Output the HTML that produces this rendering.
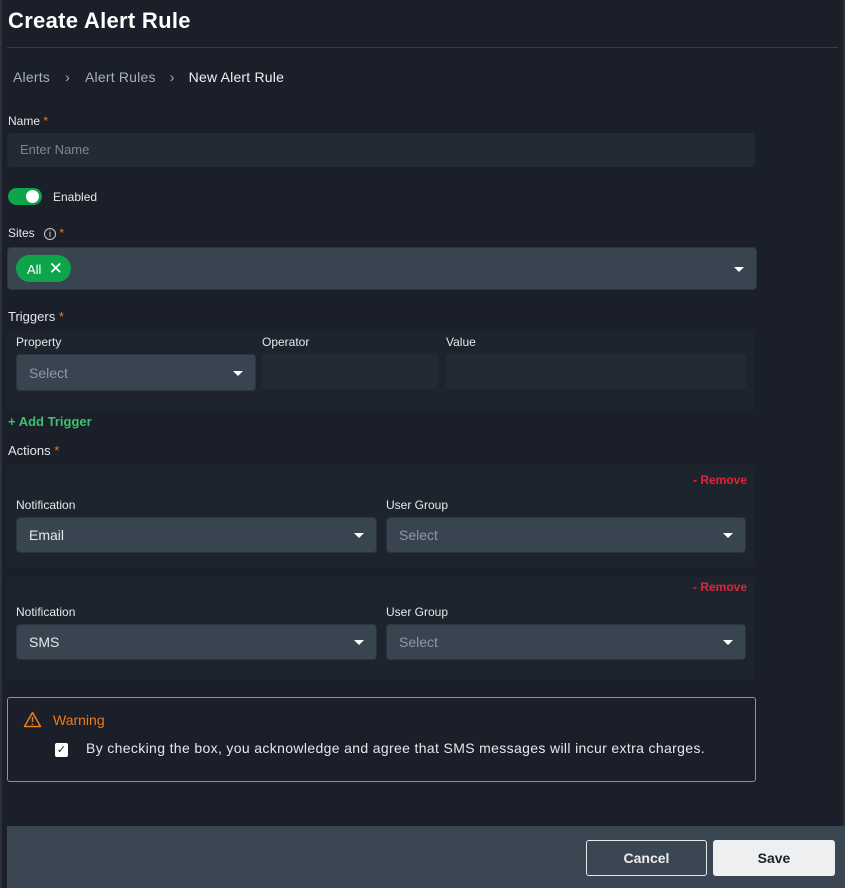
<!DOCTYPE html>
<html><head><meta charset="utf-8"><style>
*{box-sizing:border-box;margin:0;padding:0}
body{width:845px;height:888px;background:#1a1f29;font-family:"Liberation Sans",sans-serif;color:#e6e8eb;position:relative;overflow:hidden}
.a{position:absolute}
.lbl{font-size:12px;color:#e6e8eb}
.st{color:#f07c1a}
.panel{background:#1e242d}
.inp{background:#222a33;border-radius:4px}
.sel{background:#38444f;border:1px solid #2c343d;border-radius:4px;font-size:14px;padding-left:12px;display:flex;align-items:center}
.car{position:absolute;right:12px;top:50%;margin-top:-2px;width:0;height:0;border-left:5px solid transparent;border-right:5px solid transparent;border-top:5px solid #fff}
.ph{color:#8f98a2}
.rm{color:#e0243a;font-size:12px;font-weight:bold}
</style></head><body>
<div class="a" style="left:0;top:0;width:2px;height:888px;background:#2a313b"></div>
<div class="a" style="right:0;top:0;width:2px;height:888px;background:#2a313b"></div>
<div class="a" style="left:8px;top:8px;font-size:22px;font-weight:bold;color:#fff;letter-spacing:0.3px">Create Alert Rule</div>
<div class="a" style="left:7px;top:47px;width:831px;height:1px;background:#353d48"></div>
<div class="a" style="left:13px;top:69px;font-size:14px;color:#a9b0b8;letter-spacing:0.2px">Alerts<span style="display:inline-block;width:35px;text-align:center">›</span>Alert Rules<span style="display:inline-block;width:33px;text-align:center">›</span><span style="color:#eef0f2">New Alert Rule</span></div>
<div class="a lbl" style="left:8px;top:114px">Name <span class="st">*</span></div>
<div class="a inp" style="left:7px;top:133px;width:748px;height:34px;font-size:13px;padding:9px 13px;color:#7d8690">Enter Name</div>
<div class="a" style="left:8px;top:188px;width:34px;height:17px;background:#0ea44c;border-radius:9px"><div class="a" style="right:3px;top:2px;width:13px;height:13px;border-radius:50%;background:#fff"></div></div>
<div class="a lbl" style="left:53px;top:190px">Enabled</div>
<div class="a lbl" style="left:8px;top:226px">Sites <span style="display:inline-block;width:12px;height:12px;border:1px solid #ccc;border-radius:50%;font-size:9px;text-align:center;line-height:10px;margin-left:6px">i</span> <span class="st">*</span></div>
<div class="a sel" style="left:7px;top:247px;width:750px;height:43px;padding-left:8px"><div style="background:#0ea44c;border-radius:14px;height:27px;width:55px;color:#fff;font-size:13px;padding-left:11px;line-height:27px">All&nbsp; <span style="font-size:17px">✕</span></div><div class="car"></div></div>
<div class="a lbl" style="left:8px;top:309px;font-size:13px">Triggers <span class="st">*</span></div>
<div class="a panel" style="left:7px;top:331px;width:748px;height:80px"></div>
<div class="a lbl" style="left:16px;top:335px">Property</div>
<div class="a lbl" style="left:262px;top:335px">Operator</div>
<div class="a lbl" style="left:446px;top:335px">Value</div>
<div class="a sel" style="left:16px;top:354px;width:240px;height:37px"><span class="ph">Select</span><div class="car"></div></div>
<div class="a inp" style="left:262px;top:354px;width:176px;height:35px"></div>
<div class="a inp" style="left:446px;top:354px;width:300px;height:35px"></div>
<div class="a" style="left:8px;top:414px;font-size:13px;font-weight:bold;color:#3cc26c">+ Add Trigger</div>
<div class="a lbl" style="left:8px;top:443px;font-size:13px">Actions <span class="st">*</span></div>

<div class="a panel" style="left:7px;top:465px;width:748px;height:102px"></div>
<div class="a rm" style="left:693px;top:473px">- Remove</div>
<div class="a lbl" style="left:16px;top:498px">Notification</div>
<div class="a lbl" style="left:386px;top:498px">User Group</div>
<div class="a sel" style="left:16px;top:517px;width:361px;height:36px">Email<div class="car"></div></div>
<div class="a sel" style="left:386px;top:517px;width:360px;height:36px"><span class="ph">Select</span><div class="car"></div></div>

<div class="a panel" style="left:7px;top:577px;width:748px;height:103px"></div>
<div class="a rm" style="left:693px;top:580px">- Remove</div>
<div class="a lbl" style="left:16px;top:605px">Notification</div>
<div class="a lbl" style="left:386px;top:605px">User Group</div>
<div class="a sel" style="left:16px;top:624px;width:361px;height:36px">SMS<div class="car"></div></div>
<div class="a sel" style="left:386px;top:624px;width:360px;height:36px"><span class="ph">Select</span><div class="car"></div></div>

<div class="a" style="left:7px;top:697px;width:749px;height:85px;border:1px solid #e0821c;border-radius:3px"></div>
<svg class="a" style="left:23px;top:711px" width="19" height="17" viewBox="0 0 19 17"><path d="M9.5 1.5L1.5 15.5h16z" fill="none" stroke="#f07c1a" stroke-width="1.5" stroke-linejoin="round"/><path d="M9.5 6v5M9.5 12.5v1.3" stroke="#f07c1a" stroke-width="1.5"/></svg>
<div class="a" style="left:53px;top:712px;font-size:14px;color:#f07c1a">Warning</div>
<div class="a" style="left:55px;top:743px;width:13px;height:14px;background:#fff;border-radius:2px;color:#222;font-size:11px;text-align:center;line-height:14px">✓</div>
<div class="a" style="left:86px;top:740px;font-size:14px;color:#e6e8eb;letter-spacing:0.35px">By checking the box, you acknowledge and agree that SMS messages will incur extra charges.</div>

<div class="a" style="left:7px;top:826px;width:838px;height:62px;background:#3a4652"></div>
<div class="a" style="left:586px;top:840px;width:121px;height:36px;border:1px solid #e6e8eb;border-radius:3px;font-size:14px;font-weight:bold;text-align:center;line-height:34px;color:#eee">Cancel</div>
<div class="a" style="left:713px;top:840px;width:122px;height:36px;background:#eeeff1;border-radius:3px;font-size:14px;font-weight:bold;text-align:center;line-height:36px;color:#1a1f29">Save</div>
</body></html>
